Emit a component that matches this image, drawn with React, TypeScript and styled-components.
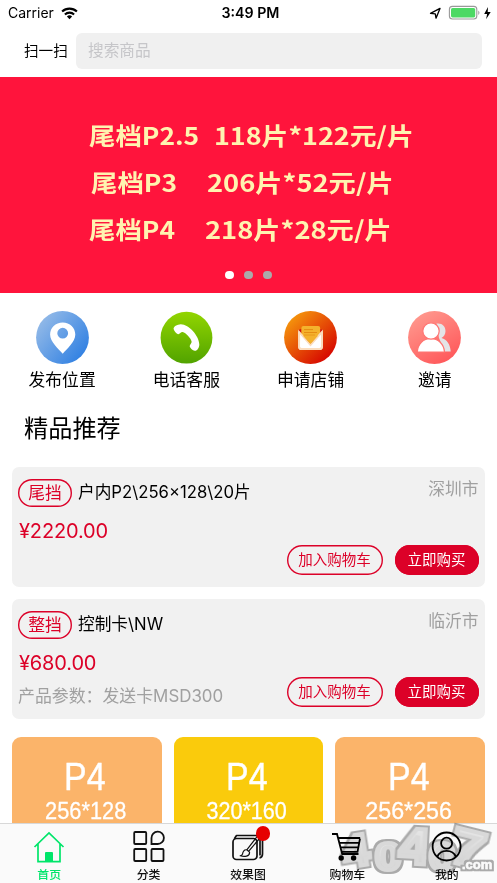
import React from "react";
import styled, { createGlobalStyle } from "styled-components";

const sans = `Inter, "Noto Sans CJK SC", sans-serif`;
const red = "#dc0128";

const Global = createGlobalStyle`
  * { box-sizing: border-box; }
  html, body { margin: 0; padding: 0; background: #fff; overflow: hidden; }
  body { font-family: ${sans}; color: #000; }
  button { font-family: inherit; margin: 0; padding: 0; }
  svg { display: block; flex: none; }
`;

const Screen = styled.div`
  position: relative;
  width: 497px;
  height: 883px;
  display: flex;
  flex-direction: column;
  overflow: hidden;
  background: #fff;
`;

const StatusBar = styled.header`
  height: 26px;
  flex: none;
  display: grid;
  grid-template-columns: 1fr auto 1fr;
  align-items: center;
  padding: 0 6px 0 8px;
`;
const StatusLeft = styled.div`
  display: flex;
  align-items: center;
  gap: 7px;
  font-size: 14px;
  line-height: 20px;
`;
const Clock = styled.div`
  font-size: 14.2px;
  font-weight: 600;
  line-height: 20px;
  padding-left: 2px;
`;
const StatusRight = styled.div`
  display: flex;
  justify-content: flex-end;
  align-items: center;
`;

const SearchRow = styled.div`
  height: 51px;
  flex: none;
  display: flex;
  align-items: flex-start;
  padding: 7px 15px 0 24px;
`;
const Scan = styled.span`
  width: 52px;
  font-size: 14.6px;
  line-height: 36px;
`;
const SearchBox = styled.div`
  flex: 1;
  height: 36px;
  border-radius: 6px;
  background: #f0f0f0;
  color: #c6c6c9;
  font-size: 15.7px;
  line-height: 36px;
  padding-left: 12px;
`;

const Banner = styled.section`
  height: 216px;
  flex: none;
  display: flex;
  flex-direction: column;
  background: #ff143c;
  padding-top: 34px;
`;
const BannerLine = styled.div<{ $left: number }>`
  height: 47px;
  display: flex;
  padding-left: ${(p) => p.$left}px;
  font-family: "Noto Sans CJK SC", sans-serif;
  font-weight: 700;
  font-size: 24px;
  line-height: 47px;
  color: #fff3b0;
  white-space: nowrap;
`;
const BannerPart = styled.span<{ $w: number; $scale: number }>`
  display: block;
  width: ${(p) => p.$w}px;
  transform: scaleX(${(p) => p.$scale});
  transform-origin: left center;
`;
const Dots = styled.div`
  display: flex;
  justify-content: center;
  gap: 10.5px;
  margin-top: 18.5px;
`;
const Dot = styled.i<{ $on?: boolean }>`
  width: 8.5px;
  height: 8.5px;
  border-radius: 50%;
  background: ${(p) => (p.$on ? "#fff" : "#aaa")};
`;

const Shortcuts = styled.nav`
  flex: none;
  height: 108px;
  display: grid;
  grid-template-columns: repeat(4, 1fr);
  padding-top: 17.5px;
`;
const Shortcut = styled.div`
  display: flex;
  flex-direction: column;
  align-items: center;
  font-size: 16.8px;
  line-height: 24px;
  gap: 4.5px;
`;

const Title = styled.h2`
  flex: none;
  margin: 0;
  height: 66px;
  padding: 12px 0 0 24px;
  font-size: 24.2px;
  font-weight: 400;
  line-height: 32px;
`;

const Card = styled.article`
  flex: none;
  height: 119.5px;
  margin: 0 12.5px 12.5px 12px;
  padding: 12px 6px 0;
  border-radius: 7px;
  background: #f1f1f1;
`;
const CardHead = styled.div`
  display: flex;
  height: 28px;
  align-items: flex-start;
`;
const Tag = styled.span`
  width: 54px;
  height: 27.5px;
  box-shadow: inset 0 0 0 1.4px ${red};
  border-radius: 14px;
  color: ${red};
  font-size: 16.8px;
  line-height: 28px;
  text-align: center;
`;
const Name = styled.span`
  flex: 1;
  padding-left: 6px;
  font-size: 16.7px;
  line-height: 27px;
`;
const City = styled.span`
  color: #a0a0a0;
  font-size: 16.8px;
  line-height: 20px;
`;
const Price = styled.div`
  height: 38px;
  padding-left: 1px;
  color: ${red};
  font-size: 20px;
  letter-spacing: -0.15px;
  line-height: 49px;
`;
const CardFoot = styled.div`
  display: flex;
  height: 30px;
  gap: 12px;
`;
const Param = styled.span`
  flex: 1;
  color: #a0a0a0;
  font-size: 16.9px;
  line-height: 39px;
`;
const Pill = styled.button<{ $solid?: boolean }>`
  width: ${(p) => (p.$solid ? 84 : 96)}px;
  height: 30px;
  border: 0;
  box-shadow: inset 0 0 0 1.4px ${red};
  border-radius: 15px;
  background: ${(p) => (p.$solid ? red : "transparent")};
  color: ${(p) => (p.$solid ? "#fff" : red)};
  font-size: 14.5px;
  line-height: 28px;
  padding-bottom: 1px;
`;

const Tiles = styled.div`
  flex: 1;
  min-height: 0;
  display: grid;
  grid-template-columns: repeat(3, 1fr);
  gap: 12px;
  margin: 5.5px 12px 0;
  overflow: hidden;
`;
const Tile = styled.div<{ $bg: string }>`
  height: 130px;
  display: flex;
  flex-direction: column;
  align-items: center;
  padding: 20px 3px 0 0;
  border-radius: 9px;
  background: ${(p) => p.$bg};
  color: #fff;
  font-family: "Liberation Sans", sans-serif;
  white-space: nowrap;
`;
const TileName = styled.span`
  font-size: 39px;
  line-height: 40px;
  -webkit-text-stroke: 0.4px #fff;
  transform: scaleX(0.87);
`;
const TileSize = styled.span<{ $scale: number }>`
  font-size: 24.5px;
  line-height: 28px;
  -webkit-text-stroke: 0.3px #fff;
  transform: scaleX(${(p) => p.$scale});
`;

const TabBar = styled.nav`
  flex: none;
  height: 60px;
  display: grid;
  grid-template-columns: repeat(5, 1fr);
  border-top: 1px solid #d8d8d8;
  background: #fafafa;
`;
const Tab = styled.div<{ $on?: boolean }>`
  position: relative;
  display: flex;
  flex-direction: column;
  align-items: center;
  padding: 6px 1px 0 0;
  color: ${(p) => (p.$on ? "#00e56a" : "#111")};
  font-size: 11.9px;
  font-weight: 500;
  line-height: 18px;
  gap: 2px;
`;
const Badge = styled.i`
  position: absolute;
  top: 2px;
  left: 57px;
  width: 14.5px;
  height: 14.5px;
  border-radius: 50%;
  background: #e60000;
`;
const Watermark = styled.svg`
  position: absolute;
  left: 330px;
  top: 815px;
  mix-blend-mode: multiply;
  pointer-events: none;
`;

const WifiIcon = () => (
  <svg width="17" height="13" viewBox="0 0 17 13">
    <g fill="none" stroke="#000" strokeWidth="2.1">
      <path d="M1.1 4.6a10.7 10.7 0 0 1 14.8 0" />
      <path d="M3.9 7.5a6.7 6.7 0 0 1 9.2 0" />
    </g>
    <path d="M8.5 12.2 5.900 9.500a3.800 3.800 0 0 1 5.200 0z" />
  </svg>
);
const StatusIcons = () => (
  <svg width="62" height="16" viewBox="0 0 62 16">
    <path d="M1.500 8.400 11 3.400 7 13.200 6.300 8.800z" fill="none" stroke="#000" strokeWidth="1.300" strokeLinejoin="round" />
    <rect x="20.400" y="1.400" width="27.400" height="12.600" rx="3" fill="#fff" stroke="#999" strokeWidth="1.100" />
    <rect x="22" y="3" width="24.200" height="9.400" rx="1.600" fill="#4cd964" />
    <path d="M49.300 5.600a2.700 2.700 0 0 1 0 4.400z" fill="#999" />
    <path d="M59 2 55.200 8.900h2.900l-1 5.300 4.600-7.200h-3z" />
  </svg>
);

const LocationIcon = () => (
  <svg width="53" height="53" viewBox="0 0 53 53">
    <defs>
      <linearGradient id="loc" x1="0" y1="0.1" x2="1" y2="0.9">
        <stop offset="0" stopColor="#9cbfe8" />
        <stop offset="1" stopColor="#277be2" />
      </linearGradient>
    </defs>
    <circle cx="26.5" cy="26.500" r="26.400" fill="url(#loc)" />
    <path fillRule="evenodd" fill="#fff" d="M26.700 11.500c-7.200 0-12.600 5.300-12.600 12.100 0 7.400 8.400 14.200 12.600 19.200 4.200-5 12.600-11.800 12.600-19.200 0-6.800-5.400-12.100-12.600-12.100zm0 5.300a5.400 5.400 0 1 1 0 10.800 5.400 5.400 0 0 1 0-10.800z" />
  </svg>
);
const PhoneIcon = () => (
  <svg width="53" height="53" viewBox="0 0 53 53">
    <defs>
      <linearGradient id="tel" x1="0" y1="0" x2="0" y2="1">
        <stop offset="0" stopColor="#92d500" />
        <stop offset="1" stopColor="#51a300" />
      </linearGradient>
    </defs>
    <circle cx="26.500" cy="26.700" r="25.900" fill="url(#tel)" />
    <path fill="#fff" d="M13.700 18.300c-.8-2.600 3.600-4.900 7.100-5 8.200.1 18.500 12 18.500 20.200 0 3.400-2.300 6.700-4.600 6.300-2-.4-4.500-2.700-5-4.400-.3-1.800 2.300-3 1.900-4.900-.9-3.400-5.700-8.600-8.900-9.400-1.800-.3-2.900 2.300-4.600 2.100-1.700-.3-3.900-3-4.400-4.900z" />
  </svg>
);
const MailIcon = () => (
  <svg width="53" height="53" viewBox="0 0 53 53">
    <defs>
      <linearGradient id="shop" x1="0.1" y1="0.1" x2="0.85" y2="0.9">
        <stop offset="0" stopColor="#f69a0d" />
        <stop offset="1" stopColor="#d60500" />
      </linearGradient>
    </defs>
    <circle cx="26.500" cy="26.500" r="26.400" fill="url(#shop)" />
    <path d="M14.300 19 17.500 18v5zM38.800 19 35.600 18v5z" fill="#cf0d0d" />
    <path d="M17.400 17a2 2 0 0 1 2-2h14.800a2 2 0 0 1 2 2v10H17.400z" fill="#f4b22d" />
    <path d="M20 18.600h9M20 21.500h13M20 24.200h11" stroke="#e68c12" strokeWidth="1" />
    <path d="M14.300 20 26.500 34 38.800 20v16a3 3 0 0 1-3 3H17.300a3 3 0 0 1-3-3z" fill="#fff" />
    <path d="m15.200 21 11.300 13L37.900 21v14.600a2.400 2.400 0 0 1-2.400 2.400h-18a2.400 2.400 0 0 1-2.400-2.400z" fill="none" stroke="#fbdcbd" strokeWidth="1.900" />
    <path d="m18.800 24.500 7.700 8.500 7.700-8.500z" fill="#f4b22d" />
  </svg>
);
const InviteIcon = () => (
  <svg width="53" height="53" viewBox="0 0 53 53">
    <defs>
      <linearGradient id="inv" x1="0.2" y1="0" x2="0.8" y2="1">
        <stop offset="0" stopColor="#ff9a8f" />
        <stop offset="1" stopColor="#ff5558" />
      </linearGradient>
    </defs>
    <circle cx="26.500" cy="26.500" r="26.400" fill="url(#inv)" />
    <path d="M28.500 12.600c5.500-.9 9 2.800 9 7.400 0 3.300-1.600 5.700-4 7 5.500 1.500 8.800 6.500 9.200 13.500h-6L31 27z" fill="#e4e4e6" />
    <g fill="#fff" stroke="#ff7572" strokeWidth="1.200">
      <path d="M9.300 41c.4-8 6-13.500 13.400-13.500S36 33 36.500 41z" />
      <circle cx="23" cy="20" r="8.200" />
    </g>
  </svg>
);

const HomeIcon = () => (
  <svg width="32" height="34" viewBox="0 0 32 34" fill="none" stroke="#00e56a" strokeWidth="1.700">
    <path d="M1.500 17 16 3l14.500 14M5 14v17.700h22V14" />
    <path d="M12 31.500V23a1 1 0 0 1 1-1h6a1 1 0 0 1 1 1v8.500z" fill="#00e56a" stroke="none" />
  </svg>
);
const GridIcon = () => (
  <svg width="32" height="34" viewBox="0 0 32 34" fill="none" stroke="#111" strokeWidth="1.800">
    <rect x="1.200" y="2" width="12" height="12" rx="1" />
    <path d="M18.500 14V8a6.200 6.200 0 1 1 6.200 6z" />
    <rect x="1.200" y="19" width="12" height="12" rx="1" />
    <rect x="18.500" y="19" width="12" height="12" rx="1" />
  </svg>
);
const PaintIcon = () => (
  <svg width="32" height="34" viewBox="0 0 32 34" fill="none" stroke="#111" strokeWidth="1.700" strokeLinejoin="round">
    <rect x="1" y="8.500" width="24" height="21" rx="3.500" />
    <path d="M2.300 8.700 4.500 5.500h22a4 4 0 0 1 4 4V24c0 2.200-1 3.500-3 3.800M6 5.500h20a3 3 0 0 1 2 3v17" />
    <path d="M25.500 6 14.800 19.800M27.500 8.500 16.800 21.200M14.800 19.800c-3-.4-4 2.300-4.200 4-.2 1.200-1.200 1.700-2.400 2 4 1.300 9.800.8 9.300-3.700zM14.800 19.800l2.700 2.300" strokeWidth="1.200" />
  </svg>
);
const CartIcon = () => (
  <svg width="32" height="34" viewBox="0 0 32 34" fill="none" stroke="#000" strokeWidth="1.800">
    <path d="M1 4h5L11.200 24M6.700 8h22.500M8 12.800h20M9 17.300h18M11 21.800h15.500L29 8.500M10.500 24h17" />
    <circle cx="10.200" cy="28" r="2.700" fill="#000" stroke="none" />
    <circle cx="22.600" cy="28" r="2.700" fill="#000" stroke="none" />
  </svg>
);
const UserIcon = () => (
  <svg width="32" height="34" viewBox="0 0 32 34" fill="none" stroke="#000" strokeWidth="1.800">
    <circle cx="15.600" cy="16.500" r="14" />
    <circle cx="15.600" cy="13.200" r="5.500" />
    <path d="M6.300 26.800c1.600-4 5-6 9.300-6s7.700 2 9.300 6" />
  </svg>
);

const shortcuts = [
  { label: "发布位置", Icon: LocationIcon },
  { label: "电话客服", Icon: PhoneIcon },
  { label: "申请店铺", Icon: MailIcon },
  { label: "邀请", Icon: InviteIcon },
];
const bannerLines = [
  { left: 89, first: "尾档P2.5", w: 125, second: "118片*122元/片", scale: 1.12 },
  { left: 91, first: "尾档P3", w: 116, second: "206片*52元/片", scale: 1.137 },
  { left: 89, first: "尾档P4", w: 116, second: "218片*28元/片", scale: 1.137 },
];
const products = [
  { tag: "尾挡", name: "户内P2\\256×128\\20片", city: "深圳市", price: "¥2220.00", param: "" },
  { tag: "整挡", name: "控制卡\\NW", city: "临沂市", price: "¥680.00", param: "产品参数：发送卡MSD300" },
];
const tiles = [
  { size: "256*128", bg: "#fbb46a", scale: 0.89 },
  { size: "320*160", bg: "#facb0c", scale: 0.88 },
  { size: "256*256", bg: "#fbb46a", scale: 0.95 },
];
const tabs = [
  { label: "首页", Icon: HomeIcon, on: true },
  { label: "分类", Icon: GridIcon },
  { label: "效果图", Icon: PaintIcon, badge: true },
  { label: "购物车", Icon: CartIcon },
  { label: "我的", Icon: UserIcon },
];

export default function App() {
  return (
    <Screen>
      <Global />
      <StatusBar>
        <StatusLeft>Carrier<WifiIcon /></StatusLeft>
        <Clock>3:49 PM</Clock>
        <StatusRight><StatusIcons /></StatusRight>
      </StatusBar>
      <SearchRow>
        <Scan>扫一扫</Scan>
        <SearchBox>搜索商品</SearchBox>
      </SearchRow>
      <Banner>
        {bannerLines.map((l) => (
          <BannerLine key={l.first} $left={l.left}>
            <BannerPart $w={l.w} $scale={1.1}>{l.first}</BannerPart>
            <BannerPart $w={200} $scale={l.scale}>{l.second}</BannerPart>
          </BannerLine>
        ))}
        <Dots><Dot $on /><Dot /><Dot /></Dots>
      </Banner>
      <Shortcuts>
        {shortcuts.map(({ label, Icon }) => (
          <Shortcut key={label}><Icon />{label}</Shortcut>
        ))}
      </Shortcuts>
      <Title>精品推荐</Title>
      {products.map((p) => (
        <Card key={p.name}>
          <CardHead>
            <Tag>{p.tag}</Tag>
            <Name>{p.name}</Name>
            <City>{p.city}</City>
          </CardHead>
          <Price>{p.price}</Price>
          <CardFoot>
            <Param>{p.param}</Param>
            <Pill>加入购物车</Pill>
            <Pill $solid>立即购买</Pill>
          </CardFoot>
        </Card>
      ))}
      <Tiles>
        {tiles.map((t) => (
          <Tile key={t.size} $bg={t.bg}>
            <TileName>P4</TileName>
            <TileSize $scale={t.scale}>{t.size}</TileSize>
          </Tile>
        ))}
      </Tiles>
      <TabBar>
        {tabs.map(({ label, Icon, on, badge }) => (
          <Tab key={label} $on={on}>
            {badge && <Badge />}
            <Icon />
            {label}
          </Tab>
        ))}
      </TabBar>
      <Watermark width="167" height="68" viewBox="0 -5 167 68">
        <defs>
          <linearGradient id="wm" x1="0" y1="0" x2="0" y2="1">
            <stop offset="0" stopColor="#f0f0f0" />
            <stop offset="1" stopColor="#d2d2d2" />
          </linearGradient>
          <filter id="edge" x="-20%" y="-20%" width="140%" height="140%">
            <feMorphology in="SourceAlpha" operator="dilate" radius="1.5" result="fat" />
            <feFlood floodColor="#aeaeae" />
            <feComposite in2="fat" operator="in" result="rim" />
            <feMerge>
              <feMergeNode in="rim" />
              <feMergeNode in="SourceGraphic" />
            </feMerge>
          </filter>
        </defs>
        <g fontFamily="Liberation Sans, sans-serif" fontWeight="700" fill="url(#wm)" stroke="#dedede" strokeWidth="4">
          <text filter="url(#edge)" transform="translate(15 48) rotate(-9) scale(1.1 1)" fontSize="44">4</text>
          <text filter="url(#edge)" transform="translate(45 50) scale(1.25 1)" fontSize="38">0</text>
          <text filter="url(#edge)" transform="translate(68 43) rotate(3) scale(1.12 1)" fontSize="50">4</text>
          <text filter="url(#edge)" transform="translate(99 50) scale(1.25 1)" fontSize="38">0</text>
          <text filter="url(#edge)" transform="translate(117 41) rotate(14) scale(1.25 1)" fontSize="50">7</text>
          <text filter="url(#edge)" x="132" y="49" fontSize="13" strokeWidth="0.6" stroke="#fff" fill="#fff">.com</text>
        </g>
      </Watermark>
    </Screen>
  );
}
